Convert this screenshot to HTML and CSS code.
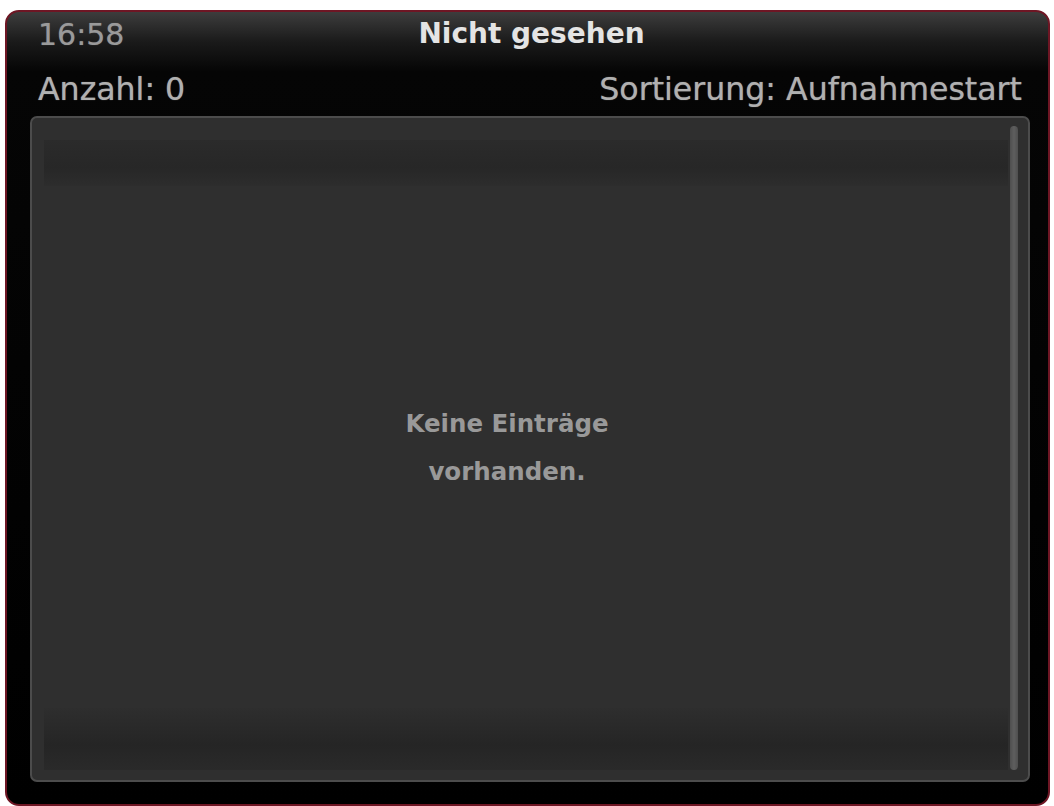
FILE: index.html
```html
<!DOCTYPE html>
<html lang="de">
<head>
    <meta charset="UTF-8">
    <title>Nicht gesehen</title>
    <link rel="stylesheet" href="styles.css">
</head>
<body>
    <div class="screen">
        <div class="title-bar">
            <span class="clock">16:58</span>
            <span class="title">Nicht gesehen</span>
        </div>
        <div class="info-bar">
            <span class="count">Anzahl: 0</span>
            <span class="sort">Sortierung: Aufnahmestart</span>
        </div>
        <div class="list-panel">
            <div class="list-body">
                <div class="band-top"></div>
                <p class="empty">Keine Einträge<br>vorhanden.</p>
                <div class="band-bottom"></div>
            </div>
            <div class="scrollbar"></div>
        </div>
    </div>
</body>
</html>
```

FILE: styles.css
```css
body {
    margin: 0;
    background-color: #ffffff;
    font-family: "DejaVu Sans", "Noto Sans", sans-serif;
}

.screen {
    margin: 10px 0 0 5px;
    width: 1045px;
    height: 796px;
    box-sizing: border-box;
    border: 2px solid #6e1624;
    border-radius: 14px;
    background: linear-gradient(to bottom, #3d3d3d 0px, #1a1a1a 30px, #050505 60px, #000000 100%);
    display: flex;
    flex-direction: column;
    overflow: hidden;
}

.title-bar {
    position: relative;
    height: 46px;
    display: flex;
    align-items: center;
    padding: 0 31px;
}

.clock {
    font-size: 30px;
    color: #9a9a9a;
    margin-top: -2px;
    text-shadow: 0 0 1px rgba(154, 154, 154, 0.6);
}

.title {
    position: absolute;
    left: 8px;
    right: 0;
    top: 5px;
    text-align: center;
    font-size: 28px;
    font-weight: bold;
    color: #e4e4e4;
    pointer-events: none;
}

.info-bar {
    height: 58px;
    display: flex;
    justify-content: space-between;
    align-items: center;
    padding: 4px 26px 0 31px;
    box-sizing: border-box;
    font-size: 31.6px;
    color: #b0b0b0;
    text-shadow: 0 0 1px rgba(176, 176, 176, 0.7);
}

.list-panel {
    margin: 0 18px 0 23px;
    height: 666px;
    box-sizing: border-box;
    border: 2px solid #4c4c4c;
    border-radius: 7px;
    background-color: #2f2f2f;
    display: flex;
    padding: 8px 10px 10px 12px;
}

.list-body {
    flex: 1;
    display: flex;
    flex-direction: column;
    justify-content: space-between;
    align-items: center;
}

.band-top {
    align-self: stretch;
    height: 46px;
    margin-top: 14px;
    background: linear-gradient(to bottom, #2b2b2b, #272727 60%, #2d2d2d);
}

.band-bottom {
    align-self: stretch;
    height: 62px;
    background: linear-gradient(to bottom, #2e2e2e, #252525 60%, #2a2a2a);
}

.empty {
    margin: 2px 0 0 -38px;
    text-align: center;
    font-size: 24.5px;
    font-weight: bold;
    line-height: 48px;
    color: #999999;
}

.scrollbar {
    width: 8px;
    margin-left: 2px;
    border-radius: 4px;
    background: linear-gradient(to right, #4e4e4e, #5e5e5e, #4e4e4e);
}
```
